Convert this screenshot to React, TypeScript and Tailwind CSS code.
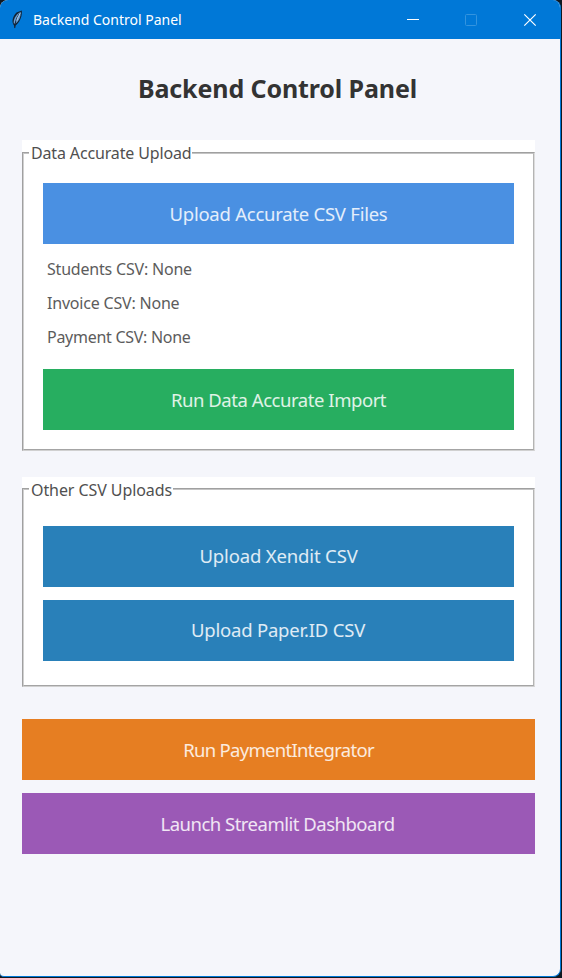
import type { ReactNode } from "react";

function Feather() {
  return (
    <svg className="ml-[10px] h-5 w-[14px] shrink-0" viewBox="0 0 14 20">
      <path d="M4.7 18.5 4 15.5C1.2 12 2.5 6.5 6.5 2.5L11.8.6C12.3 5.5 10.5 11 6.8 14.5L5.4 15.5Z" fill="#102438" />
      <path d="M3.8 13.5C3.2 9.5 5.5 5 10.8 1.8 10.9 7 8.9 11 5.5 13.8Z" fill="#6b9fd4" />
      <path d="M4.8 18C4.8 13 6.2 8 9.4 3.8" stroke="#16283b" strokeWidth="1" fill="none" />
      <path d="M6.8 10.5C7.4 8 8.8 5.5 10.2 3.4" stroke="#c5dcf2" strokeWidth=".9" fill="none" />
    </svg>
  );
}

function Action({ className, children }: { className: string; children: ReactNode }) {
  return (
    <button className={`flex h-[61px] w-full shrink-0 items-center justify-center whitespace-nowrap text-[18.5px] text-white/85 ${className}`}>
      {children}
    </button>
  );
}

function Group({ title, titleClass, className, children }: { title: string; titleClass: string; className: string; children: ReactNode }) {
  return (
    <section className={`flex w-[513px] shrink-0 flex-col bg-white ${className}`}>
      <div className="flex grow flex-col border border-t-[#a0a0a0] border-r-[#dcdcdc] border-b-[#d0d0d0] border-l-[#a0a0a0]">
        <div className="relative flex grow flex-col border border-t-[#c4c4c4] border-r-[#b4b4b4] border-b-[#a4a4a4] border-l-[#d0d0d0] px-[19px]">
          <h2 className={`absolute left-[5px] h-6 bg-white pr-px pl-[2px] text-[16px] leading-[26px] whitespace-nowrap text-[#505050] ${titleClass}`}>{title}</h2>
          {children}
        </div>
      </div>
    </section>
  );
}

export default function App() {
  return (
    <div className="h-[978px] w-[562px] overflow-hidden bg-[#101820] pr-px pb-px font-['Noto_Sans','Open_Sans',sans-serif]">
      <div className="flex h-full flex-col overflow-hidden rounded-t-[8px] rounded-br-[8px] rounded-bl-[4px] border-r border-b border-[#0078d7] bg-[#f5f6fb]">
        <header className="flex h-[39px] shrink-0 items-center bg-[#0078d7] text-white">
          <Feather />
          <span className="ml-[9px] text-[14px] whitespace-nowrap">Backend Control Panel</span>
          <svg className="ml-auto h-[39px] w-[160px] shrink-0" viewBox="0 0 160 39" fill="none">
            <path d="M7 19.5H19" stroke="white" />
            <rect x="65.5" y="14.5" width="11" height="11" rx="1" stroke="#3394df" />
            <path d="M124.3 14.3 135.7 25.7M135.7 14.3 124.3 25.7" stroke="white" strokeWidth="1.2" />
          </svg>
        </header>
        <main className="flex grow flex-col pl-[22px]">
          <h1 className="mt-[29px] h-10 w-[511px] text-center text-[25px] leading-10 font-bold tracking-[-0.12px] whitespace-nowrap text-[#333333]">Backend Control Panel</h1>
          <Group title="Data Accurate Upload" titleClass="-top-[14px] tracking-[-0.15px]" className="mt-8 h-[311px] pt-3">
            <Action className="mt-[29px] bg-[#4a90e2] tracking-[-0.25px]">Upload Accurate CSV Files</Action>
            <div className="mt-[8px] flex flex-col pl-1 text-[16px] leading-[34px] text-[#5c5c5c]">
              <p className="tracking-[-0.2px]">Students CSV: None</p>
              <p className="tracking-[-0.2px]">Invoice CSV: None</p>
              <p className="tracking-[-0.28px]">Payment CSV: None</p>
            </div>
            <Action className="mt-[15px] bg-[#27ae60] pt-px tracking-[-0.45px]">Run Data Accurate Import</Action>
          </Group>
          <Group title="Other CSV Uploads" titleClass="-top-[13px] tracking-[-0.08px]" className="mt-[26px] h-[210px] pt-[11px]">
            <Action className="mt-[36px] bg-[#2980b9] pb-px tracking-[-0.15px]">Upload Xendit CSV</Action>
            <Action className="mt-[13px] bg-[#2980b9] pr-px pb-px tracking-[-0.2px]">Upload Paper.ID CSV</Action>
          </Group>
          <div className="mt-8 flex w-[513px] flex-col gap-[13px]">
            <Action className="bg-[#e67e22] pt-px tracking-[-0.7px]">Run PaymentIntegrator</Action>
            <Action className="bg-[#9b59b6] pt-px pr-0.5 tracking-[-0.5px]">Launch Streamlit Dashboard</Action>
          </div>
        </main>
      </div>
    </div>
  );
}
